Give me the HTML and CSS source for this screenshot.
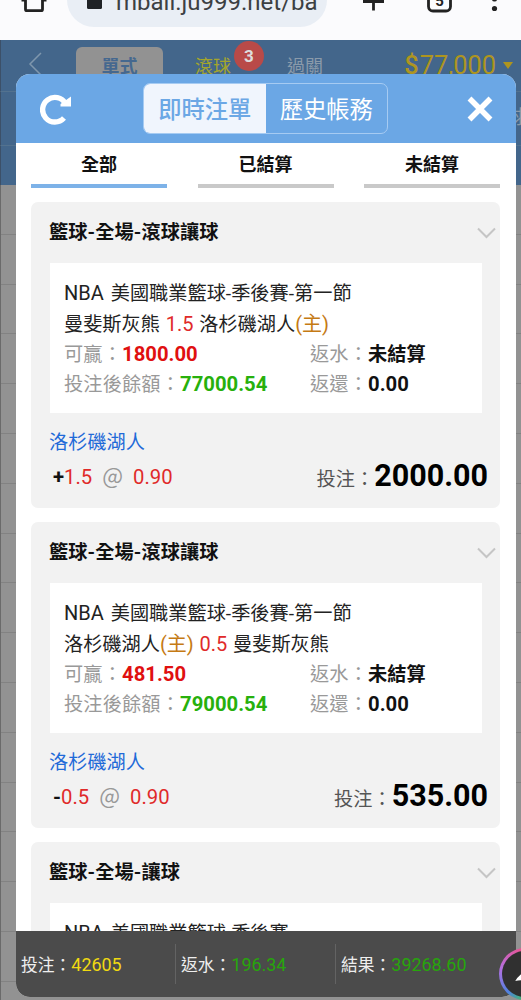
FILE: index.html
```html
<!DOCTYPE html>
<html lang="zh-Hant">
<head>
    <meta charset="UTF-8">
    <meta name="viewport" content="width=device-width, initial-scale=1.0">
    <title>即時注單</title>
    <link rel="stylesheet" href="styles.css">
</head>
<body>
    <div class="browser-bar">
        <svg class="home-icon" width="28" height="40" viewBox="0 0 28 40"><path d="M5.500 -5V9.200Q5.500 10.700 7 10.700H21Q22.500 10.700 22.500 9.200V-5M1.500 0H6M22 0H26.500" fill="none" stroke="#222" stroke-width="2.800"/></svg>
        <div class="address">
            <svg class="lock-icon" width="16" height="40" viewBox="0 0 16 40"><rect x="0" y="-6" width="15" height="15" rx="1.500" fill="#1f2226"/></svg>
            <span class="url">mball.ju999.net/ba</span>
        </div>
        <svg class="bar-icons" width="135" height="40" viewBox="0 0 135 40">
            <path d="M-10 1.500H11M0.500 -8V10.500" fill="none" stroke="#222" stroke-width="2.800"/>
            <rect x="55.500" y="-12" width="22" height="23" rx="4.500" fill="none" stroke="#222" stroke-width="2.800"/>
            <text x="66.500" y="5.500" text-anchor="middle" class="tab-count">5</text>
            <circle cx="121.500" cy="-1" r="2.600" fill="#222"/>
            <circle cx="121.500" cy="8.500" r="2.600" fill="#222"/>
        </svg>
    </div>

    <div class="page">
        <div class="page-nav">
            <svg class="back" width="14" height="24" viewBox="0 0 14 24"><path d="M13 1L2 12L13 23" fill="none" stroke="#7f97ad" stroke-width="1.500"/></svg>
            <span class="nav-btn">單式</span>
            <span class="nav-live">滾球<b class="badge">3</b></span>
            <span class="nav-item">過關</span>
            <span class="balance"><b>$</b>77,000<i class="caret"></i></span>
        </div>
        <div class="page-sub"><span>球</span></div>
        <div class="page-sub last"></div>
        <div class="page-rows"></div>
    </div>

    <div class="modal">
        <div class="modal-header">
            <svg class="refresh" width="32" height="32" viewBox="0 0 32 32">
                <path d="M24 25A12.300 12.300 0 1 1 25.500 10.500" fill="none" stroke="#fff" stroke-width="5.400"/>
                <path d="M31 3.500V13.500H20.500V11Z" fill="#fff"/>
            </svg>
            <div class="switch">
                <span class="switch-item active">即時注單</span>
                <span class="switch-item">歷史帳務</span>
            </div>
            <svg class="close" width="26" height="26" viewBox="0 0 26 26"><path d="M2.500 2.500L23.500 23.500M23.500 2.500L2.500 23.500" stroke="#fff" stroke-width="5.500"/></svg>
        </div>

        <div class="tabs">
            <div class="tab active">全部</div>
            <div class="tab">已結算</div>
            <div class="tab">未結算</div>
        </div>

        <div class="list">
            <div class="card">
                <div class="card-title">籃球-全場-滾球讓球
                    <svg class="chevron" width="19" height="12" viewBox="0 0 19 12"><path d="M1 1.500L9.500 10L18 1.500" fill="none" stroke="#c5c5c5" stroke-width="2"/></svg>
                </div>
                <div class="detail">
                    <div class="line"><span class="latin">NBA </span>美國職業籃球-季後賽-第一節</div>
                    <div class="line">曼斐斯灰熊 <span class="red">1.5</span> 洛杉磯湖人<span class="home">(主)</span></div>
                    <div class="line pair"><span class="col"><span class="label">可贏：</span><b class="num win">1800.00</b></span><span><span class="label">返水：</span><b>未結算</b></span></div>
                    <div class="line pair"><span class="col"><span class="label">投注後餘額：</span><b class="num left">77000.54</b></span><span><span class="label">返還：</span><b class="num">0.00</b></span></div>
                </div>
                <div class="team">洛杉磯湖人</div>
                <div class="bet">
                    <span class="odds"><b>+</b>1.5 <span class="at">@</span> 0.90</span>
                    <span class="stake">投注：<b>2000.00</b></span>
                </div>
            </div>

            <div class="card">
                <div class="card-title">籃球-全場-滾球讓球
                    <svg class="chevron" width="19" height="12" viewBox="0 0 19 12"><path d="M1 1.500L9.500 10L18 1.500" fill="none" stroke="#c5c5c5" stroke-width="2"/></svg>
                </div>
                <div class="detail">
                    <div class="line"><span class="latin">NBA </span>美國職業籃球-季後賽-第一節</div>
                    <div class="line">洛杉磯湖人<span class="home">(主)</span> <span class="red">0.5</span> 曼斐斯灰熊</div>
                    <div class="line pair"><span class="col"><span class="label">可贏：</span><b class="num win">481.50</b></span><span><span class="label">返水：</span><b>未結算</b></span></div>
                    <div class="line pair"><span class="col"><span class="label">投注後餘額：</span><b class="num left">79000.54</b></span><span><span class="label">返還：</span><b class="num">0.00</b></span></div>
                </div>
                <div class="team">洛杉磯湖人</div>
                <div class="bet">
                    <span class="odds"><b>-</b>0.5 <span class="at">@</span> 0.90</span>
                    <span class="stake">投注：<b>535.00</b></span>
                </div>
            </div>

            <div class="card">
                <div class="card-title">籃球-全場-讓球
                    <svg class="chevron" width="19" height="12" viewBox="0 0 19 12"><path d="M1 1.500L9.500 10L18 1.500" fill="none" stroke="#c5c5c5" stroke-width="2"/></svg>
                </div>
                <div class="detail">
                    <div class="line"><span class="latin">NBA </span>美國職業籃球-季後賽</div>
                </div>
            </div>
        </div>

        <div class="summary">
            <div class="sum">投注：<span class="yellow">42605</span></div>
            <div class="sum">返水：<span class="green">196.34</span></div>
            <div class="sum">結果：<span class="green">39268.60</span></div>
        </div>
    </div>

    <div class="float-btn">
        <svg width="52" height="52" viewBox="0 0 52 52"><path d="M15 34Q18 28 26 23V33Q20 33 15 34Z" fill="#fff"/></svg>
    </div>
</body>
</html>
```

FILE: styles.css
```css
* {
    box-sizing: border-box;
}
body {
    margin: 0;
    position: relative;
    width: 521px;
    height: 1000px;
    overflow: hidden;
    font-family: Roboto, "Noto Sans CJK TC", sans-serif;
    font-size: 19.2px;
    color: #222;
    background: #929292;
}
b {
    font-weight: bold;
}

/* browser bar */
.browser-bar {
    display: flex;
    height: 40px;
    padding-left: 20px;
    background: #fbfbfd;
    overflow: hidden;
}
.address {
    display: flex;
    width: 260px;
    height: 27px;
    margin: 0 46px 0 19px;
    padding-left: 20px;
    border-radius: 0 0 27px 27px;
    background: #e9eef5;
    overflow: hidden;
}
.home-icon,
.lock-icon,
.bar-icons {
    flex-shrink: 0;
}
.bar-icons {
    overflow: visible;
}
.tab-count {
    font-size: 15px;
    font-weight: bold;
    fill: #222;
}
.url {
    width: 202px;
    margin: -14px 0 0 13px;
    font-size: 24px;
    line-height: 32px;
    color: #3c4043;
    overflow: hidden;
    white-space: nowrap;
}

/* dimmed page behind the dialog */
.page-nav {
    display: flex;
    height: 51px;
    padding: 7px 8px 0 27px;
    border-left: 1px solid #3c5068;
    background: #43668b;
    font-size: 18px;
    line-height: 39px;
    color: #8a9aaa;
}
.back {
    margin-top: 5px;
}
.nav-btn {
    width: 87px;
    height: 44px;
    margin-left: 34px;
    border-radius: 6px;
    background: #929292;
    color: #45688f;
    font-weight: bold;
    text-align: center;
}
.nav-live {
    position: relative;
    margin-left: 32px;
    color: #a3a52c;
}
.badge {
    position: absolute;
    top: -6px;
    left: 39px;
    width: 30px;
    height: 30px;
    border-radius: 50%;
    background: #b94a48;
    color: #ddd;
    font-size: 17px;
    line-height: 30px;
    text-align: center;
}
.nav-item {
    margin-left: 56px;
}
.balance {
    display: flex;
    align-items: center;
    height: 36px;
    margin-left: auto;
    font-size: 25.4px;
    color: #ae951f;
}
.balance b {
    font-weight: 500;
    margin-right: 1px;
}
.caret {
    margin-left: 7px;
    border: 5px solid transparent;
    border-top: 7px solid #ae951f;
    border-bottom: 0;
}
.page-sub {
    height: 54px;
    border-top: 1px solid #53728f;
    border-left: 1px solid #3c5068;
    background: #43668b;
    color: #8a9aaa;
    text-align: right;
    line-height: 52px;
    overflow: hidden;
}
.page-sub span {
    margin-right: -6px;
}
.page-sub.last {
    height: 40px;
}
.page-rows {
    height: 815px;
    border-left: 1px solid #6a6a6a;
    background: repeating-linear-gradient(#929292 0, #929292 48.8px, #828282 48.8px, #828282 49.8px);
}

/* dialog */
.modal {
    position: absolute;
    top: 74px;
    left: 16px;
    display: flex;
    flex-direction: column;
    width: 500px;
    height: 923px;
    border-radius: 14px;
    background: #fff;
    overflow: hidden;
}
.modal-header {
    display: flex;
    flex-shrink: 0;
    justify-content: space-between;
    align-items: center;
    height: 69px;
    padding: 0 23px 0 24px;
    background: #6ba7e5;
}
.switch {
    display: flex;
    width: 245px;
    height: 51px;
    margin-left: 20px;
    margin-right: 28px;
    border: 1px solid #a6cbf2;
    border-radius: 7px;
    overflow: hidden;
}
.switch-item {
    flex: 1;
    font-size: 23.3px;
    line-height: 52px;
    text-align: center;
    color: #fff;
}
.switch-item.active {
    background: #f0f5fd;
    color: #6ba7e5;
    font-weight: 500;
}
.tabs {
    display: flex;
    flex-shrink: 0;
    justify-content: space-between;
    padding: 0 16px 0 15px;
}
.tab {
    width: 136px;
    height: 45px;
    border-bottom: 4px solid #c9c9c9;
    font-size: 18px;
    font-weight: bold;
    line-height: 44px;
    text-align: center;
    color: #111;
}
.tab.active {
    border-color: #7db2e8;
}
.list {
    flex: 1;
    min-height: 0;
    padding: 14px 16px 0 15px;
    overflow: hidden;
}
.card {
    height: 306px;
    margin-bottom: 14px;
    padding: 0 18px;
    border-radius: 7px;
    background: #f2f2f2;
}
.card-title {
    display: flex;
    justify-content: space-between;
    align-items: center;
    height: 61px;
    margin-right: -14px;
    padding-bottom: 3px;
    font-weight: bold;
    color: #111;
    letter-spacing: 0.1px;
}
.chevron {
    margin-top: 4px;
}
.detail {
    height: 150px;
    margin-left: 1px;
    padding: 15.4px 14px;
    background: #fff;
}
.line {
    height: 30.2px;
    line-height: 30.2px;
    white-space: nowrap;
    word-spacing: 1px;
}
.line .latin,
.line .red,
.line .home {
    font-size: 20px;
}
.line .latin {
    word-spacing: 2px;
}
.pair {
    display: flex;
    align-items: baseline;
}
.col {
    width: 246px;
}
.label {
    letter-spacing: 0.15px;
    color: #999;
}
.pair b {
    color: #111;
}
.pair .num {
    font-size: 20.3px;
}
.pair .win {
    color: #e01010;
}
.pair .left {
    color: #27b00c;
}
.red {
    color: #e02a2a;
}
.home {
    color: #c57a14;
}
.team {
    margin-top: 15px;
    line-height: 30px;
    color: #1f6ad8;
}
.bet {
    display: flex;
    justify-content: space-between;
    align-items: flex-start;
    margin-right: -6px;
    padding-left: 4px;
    line-height: 36px;
}
.odds {
    padding-top: 1px;
    font-size: 20.3px;
    color: #e02a2a;
    white-space: pre;
}
.odds b {
    color: #111;
}
.at {
    margin: 0 5px;
    font-family: "Noto Sans CJK TC", sans-serif;
    font-size: 22px;
    line-height: 1;
    color: #999;
}
.stake {
    color: #555;
}
.stake b {
    font-size: 30.5px;
    color: #000;
}
.summary {
    display: flex;
    flex-shrink: 0;
    align-items: center;
    height: 66px;
    background: #4b4b4b;
}
.sum {
    width: 160px;
    height: 40px;
    padding-left: 5px;
    border-right: 1px solid #636363;
    font-size: 16.8px;
    line-height: 41px;
    color: #eee;
    white-space: nowrap;
}
.sum:last-child {
    border: 0;
}
.sum span {
    font-size: 17.9px;
}
.yellow {
    color: #f0d911;
}
.green {
    color: #27a50c;
}

/* floating button at the right edge */
.float-btn {
    position: absolute;
    top: 948px;
    left: 499px;
    width: 52px;
    height: 52px;
    padding: 3px;
    border-radius: 50%;
    background: conic-gradient(#f0507a, #f0a050 25%, #40c060 50%, #5080e0 62%, #b070e0 78%, #f0508a);
}
.float-btn svg {
    display: block;
    width: 46px;
    height: 46px;
    border-radius: 50%;
    background: #303030;
}
```
